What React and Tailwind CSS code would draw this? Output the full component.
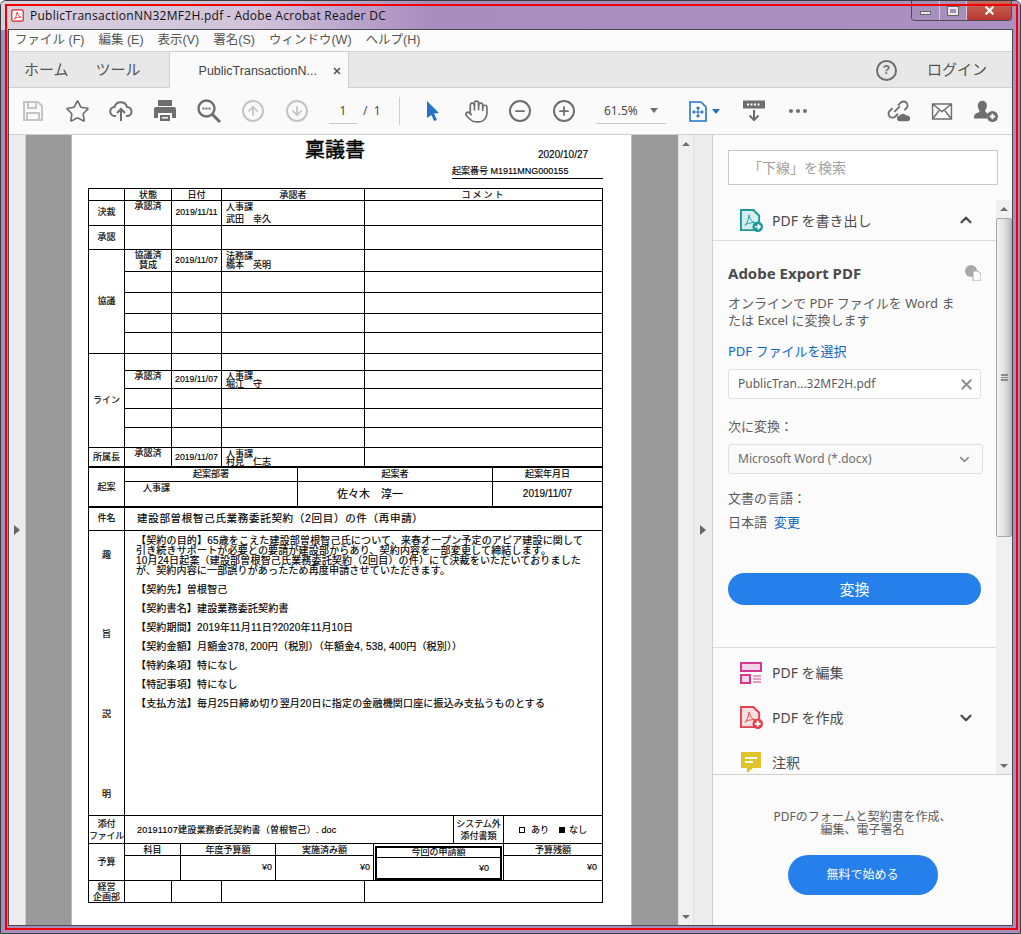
import { Star, ArrowUp, ArrowDown, Hand, Minus, Plus, X, ChevronUp, ChevronDown } from 'lucide-react'

const CJK = 'font-["Liberation_Sans","Noto_Sans_CJK_JP",sans-serif]'

const MENU = ['ファイル (F)', '編集 (E)', '表示(V)', '署名(S)', 'ウィンドウ(W)', 'ヘルプ(H)']

// ---- icons that no package has in this shape ----
function PdfLogo({ className = '', color = '#e0434b', fill = '#fbdfe0', badge = 'plus' }) {
  return (
    <svg viewBox="0 0 24 24" className={className}>
      <path d="M1 1h13l6 6v9a5 5 0 0 0-4 6H1z" fill={fill} stroke={color} strokeWidth="2" />
      <path d="M5 17c2-1 4-6 4-9s1-2 1 0 3 6 5 6-7 0-10 3z" fill="none" stroke={color} strokeWidth="1" />
      <circle cx="18.5" cy="18.5" r="5.5" fill={color} />
      {badge === 'plus'
        ? <path d="M18.5 15.5v6M15.5 18.5h6" stroke="#fff" strokeWidth="2" />
        : <path d="M15.5 18.5h5M18.5 16l2.5 2.5-2.5 2.5" stroke="#fff" strokeWidth="1.6" fill="none" />}
    </svg>
  )
}

function ToolbarIcons() {
  return (
    <div className="flex items-center h-full">
      <svg viewBox="0 0 20 20" className="w-[20px] h-[20px] ml-[14px] text-[#c4c4c4]" fill="none" stroke="currentColor" strokeWidth="2">
        <path d="M1 1h14l4 4v14H1z" /><path d="M5 1v6h8V1M4 19v-7h12v7" />
      </svg>
      <Star className="w-[25px] h-[25px] ml-[22px] text-[#6e6e6e]" strokeWidth={1.6} />
      <svg viewBox="0 0 24 24" className="w-[24px] h-[24px] ml-[19px] text-[#6e6e6e]" fill="none" stroke="currentColor" strokeWidth="2">
        <path d="M7 17H6a4.5 4.5 0 0 1-.5-9A6.5 6.5 0 0 1 18 8a4.5 4.5 0 0 1 0 9h-1" /><path d="M12 22V11M8 14l4-4 4 4" />
      </svg>
      <svg viewBox="0 0 24 24" className="w-[24px] h-[24px] ml-[20px] text-[#6e6e6e]" fill="currentColor">
        <path d="M5 1h14v6H5zM3 8h18a2 2 0 0 1 2 2v9h-4v-5H5v5H1v-9a2 2 0 0 1 2-2z" /><path d="M7 16h10v6H7zM9 18v1.5h6V18z" fillRule="evenodd" />
      </svg>
      <svg viewBox="0 0 24 24" className="w-[24px] h-[24px] ml-[20px] text-[#6e6e6e]" fill="none" stroke="currentColor">
        <circle cx="9.5" cy="9.5" r="8" strokeWidth="2.4" />
        <path d="M15.5 15.5L23 23" strokeWidth="3" />
        <path d="M5.5 9.5h8" strokeWidth="2" strokeDasharray="2 1" />
      </svg>
      <span className="w-[22px] h-[22px] ml-[21px] rounded-full border-2 border-[#c4c4c4] flex items-center justify-center">
        <ArrowUp className="w-[14px] h-[14px] text-[#c4c4c4]" strokeWidth={3} />
      </span>
      <span className="w-[22px] h-[22px] ml-[22px] rounded-full border-2 border-[#c4c4c4] flex items-center justify-center">
        <ArrowDown className="w-[14px] h-[14px] text-[#c4c4c4]" strokeWidth={3} />
      </span>
      <span className="w-[28px] h-[25px] ml-[21px] border-b border-[#c8c8c8] text-center text-[12px] leading-[23px] text-[#4b4b4b]">1</span>
      <span className="ml-[6px] text-[12px] text-[#4b4b4b] w-[24px]">/ &nbsp;1</span>
      <span className="w-px h-[28px] ml-[12px] bg-[#cfcfcf]" />
      <svg viewBox="0 0 14 22" className="w-[14px] h-[22px] ml-[26px]" fill="#2273c7">
        <path d="M1 1l12 12-5 .5 3 6.5-3 1-2.5-6L1 18z" />
      </svg>
      <Hand className="w-[25px] h-[25px] ml-[24px] text-[#6e6e6e]" strokeWidth={1.6} />
      <span className="w-[22px] h-[22px] ml-[20px] rounded-full border-2 border-[#6e6e6e] flex items-center justify-center">
        <Minus className="w-[14px] h-[14px] text-[#6e6e6e]" strokeWidth={3} />
      </span>
      <span className="w-[22px] h-[22px] ml-[22px] rounded-full border-2 border-[#6e6e6e] flex items-center justify-center">
        <Plus className="w-[14px] h-[14px] text-[#6e6e6e]" strokeWidth={3} />
      </span>
      <span className="flex items-center justify-between w-[70px] h-[25px] ml-[21px] pl-[8px] pr-[8px] border-b border-[#c8c8c8] text-[12px] text-[#4b4b4b]">
        61.5%
        <span className="w-0 h-0 border-x-[4px] border-x-transparent border-t-[5px] border-t-[#6e6e6e]" />
      </span>
      <svg viewBox="0 0 18 21" className="w-[18px] h-[21px] ml-[23px]" fill="none" stroke="#2273c7" strokeWidth="1.6">
        <path d="M1 1h11l5 5v14H1z" /><path d="M9 6v10M4 11h10M7.5 7.5L9 6l1.5 1.5M7.5 14.5L9 16l1.5-1.5M5.5 9.5L4 11l1.5 1.5M12.5 9.5L14 11l-1.5 1.5" strokeWidth="1.2" />
      </svg>
      <span className="w-0 h-0 ml-[5px] border-x-[4px] border-x-transparent border-t-[5px] border-t-[#2273c7]" />
      <svg viewBox="0 0 22 22" className="w-[22px] h-[22px] ml-[23px] text-[#6e6e6e]" fill="none" stroke="currentColor">
        <path d="M0 1h22v7H0z" fill="currentColor" /><path d="M4 4.5h14" stroke="#fff" strokeWidth="2" strokeDasharray="2 1.5" />
        <path d="M11 10v10M6.5 15.5L11 20l4.5-4.5" strokeWidth="2" />
      </svg>
      <span className="flex gap-[3px] ml-[24px]">
        <span className="w-[4px] h-[4px] rounded-full bg-[#6e6e6e]" /><span className="w-[4px] h-[4px] rounded-full bg-[#6e6e6e]" /><span className="w-[4px] h-[4px] rounded-full bg-[#6e6e6e]" />
      </span>
      <svg viewBox="0 0 26 24" className="w-[24px] h-[24px] ml-[79px] text-[#6e6e6e]" fill="none" stroke="currentColor" strokeWidth="2">
        <path d="M9 13l6-6M7 9l-3 3a4 4 0 0 0 6 6l3-3M13 6l3-3a4 4 0 0 1 6 6l-2 2" />
        <path d="M15 23a3 3 0 0 1 0-6 4 4 0 0 1 7 0 3 3 0 0 1 2 6z" fill="currentColor" stroke="none" />
      </svg>
      <svg viewBox="0 0 22 18" className="w-[22px] h-[17px] ml-[21px] text-[#6e6e6e]" fill="none" stroke="currentColor" strokeWidth="1.5">
        <path d="M1 1h20v16H1zM1 1l10 8 10-8M1 17l7-9M21 17l-7-9" />
      </svg>
      <svg viewBox="0 0 26 24" className="w-[24px] h-[24px] ml-[21px] text-[#6e6e6e]" fill="currentColor">
        <path d="M9 1a5 5 0 0 1 5 5c0 3-2 5-2 6 0 1 2 2 3 3a7 7 0 0 0-1 5H0c0-4 1-5 4-6 2-1 2-1 2-2S4 9 4 6a5 5 0 0 1 5-5z" />
        <circle cx="20" cy="18" r="6" /><path d="M20 15v6M17 18h6" stroke="#fff" strokeWidth="2" />
      </svg>
    </div>
  )
}

// ---- document page ----
function Cell({ className = '', children, ...rest }) {
  return <td className={`border border-black p-0 text-center align-middle ${className}`} {...rest}>{children}</td>
}

function ApprovalTable() {
  const Row = ({ h, label, status, date, who, span }) => (
    <tr className={h}>
      {label && <Cell rowSpan={span}>{label}</Cell>}
      <Cell className="align-top leading-[10px]">{status}</Cell>
      <Cell className="text-[8.7px]">{date}</Cell>
      <Cell className="text-left pl-[4px] leading-[9px]">{who}</Cell>
      <Cell />
    </tr>
  )
  return (
    <table className="table-fixed border-collapse w-[515px]">
      <colgroup>
        <col className="w-[36px]" /><col className="w-[47px]" /><col className="w-[50px]" /><col className="w-[143px]" /><col />
      </colgroup>
      <tbody>
        <tr className="h-[12px] leading-[10px]">
          <Cell /><Cell>状態</Cell><Cell>日付</Cell><Cell>承認者</Cell><Cell className="tracking-[2px]">コメント</Cell>
        </tr>
        <Row h="h-[25px]" label="決裁" status="承認済" date="2019/11/11" who={<div className="leading-[12px]">人事課<br />武田　幸久</div>} />
        <Row h="h-[24px]" label="承認" />
        <Row h="h-[22px]" label="協議" span={5} status={<>協議済<br />賛成</>} date="2019/11/07" who={<>法務課<br />橋本　英明</>} />
        <Row h="h-[21px]" /><Row h="h-[21px]" /><Row h="h-[19px]" /><Row h="h-[21px]" />
        <Row h="h-[17px]" label="ライン" span={5} />
        <Row h="h-[18px]" status="承認済" date="2019/11/07" who={<div className="leading-[8px]">人事課<br />堀江　守</div>} />
        <Row h="h-[20px]" /><Row h="h-[19px]" /><Row h="h-[20px]" />
        <Row h="h-[20px]" label="所属長" status="承認済" date="2019/11/07" who={<div className="leading-[8px]">人事課<br />村見　仁志</div>} />
      </tbody>
    </table>
  )
}

function ProposalTable() {
  return (
    <table className="table-fixed border-collapse w-[515px] -mt-[2px]">
      <colgroup><col className="w-[36px]" /><col className="w-[173px]" /><col className="w-[195px]" /><col /></colgroup>
      <tbody>
        <tr className="h-[14px] leading-[10px]">
          <Cell rowSpan={2} className="border-t-2 border-b-2">起案</Cell>
          <Cell className="border-t-2">起案部署</Cell><Cell className="border-t-2">起案者</Cell><Cell className="border-t-2">起案年月日</Cell>
        </tr>
        <tr className="h-[26px]">
          <Cell className="border-b-2 text-left pl-[18px] align-top text-[9px]">人事課</Cell>
          <Cell className="border-b-2 text-left pl-[39px] text-[11px]">佐々木　淳一</Cell>
          <Cell className="border-b-2 text-[10px]">2019/11/07</Cell>
        </tr>
      </tbody>
    </table>
  )
}

const BODY_ITEMS = [
  '【契約先】曽根智己',
  '【契約書名】建設業務委託契約書',
  '【契約期間】2019年11月11日?2020年11月10日',
  '【契約金額】月額金378, 200円（税別）（年額金4, 538, 400円（税別））',
  '【特約条項】特になし',
  '【特記事項】特になし',
  '【支払方法】毎月25日締め切り翌月20日に指定の金融機関口座に振込み支払うものとする',
]

function SummaryTable() {
  return (
    <table className="table-fixed border-collapse w-[515px] -mt-px">
      <colgroup><col className="w-[36px]" /><col /></colgroup>
      <tbody>
        <tr className="h-[23px]">
          <Cell>件名</Cell>
          <Cell className="text-left pl-[12px] text-[10.5px] tracking-[0.7px]">建設部曽根智己氏業務委託契約（2回目）の件（再申請）</Cell>
        </tr>
        <tr className="h-[285px]">
          <Cell>
            <div className="flex flex-col h-[283px] justify-between pt-[17px] pb-[13px]">
              <span>趣</span><span>旨</span><span>説</span><span>明</span>
            </div>
          </Cell>
          <Cell className="text-left align-top pl-[11px] pt-[5px] text-[10px] tracking-[0.17px] whitespace-nowrap">
            <div className="leading-[10px]">
              <div>【契約の目的】65歳をこえた建設部曽根智己氏について、来春オープン予定のアピア建設に関して</div>
              <div>引き続きサポートが必要との要請が建設部からあり、契約内容を一部変更して締結します。</div>
              <div>10月24日起案（建設部曽根智己氏業務委託契約（2回目）の件）にて決裁をいただいておりました</div>
              <div>が、契約内容に一部誤りがあったため再度申請させていただきます。</div>
            </div>
            <div className="flex flex-col gap-[5.5px] mt-[7px] leading-[13.5px]">
              {BODY_ITEMS.map(t => <div key={t}>{t}</div>)}
            </div>
          </Cell>
        </tr>
      </tbody>
    </table>
  )
}

function AttachmentTable() {
  return (
    <table className="table-fixed border-collapse w-[515px] -mt-px">
      <colgroup><col className="w-[36px]" /><col className="w-[329px]" /><col className="w-[50px]" /><col /></colgroup>
      <tbody>
        <tr className="h-[28px] leading-[12px]">
          <Cell className="whitespace-nowrap tracking-[-0.3px]">添付<br />ファイル</Cell>
          <Cell className="text-left pl-[12px] text-[9px] tracking-[0.2px]">20191107建設業務委託契約書（曽根智己）. doc</Cell>
          <Cell className="whitespace-nowrap">システム外<br />添付書類</Cell>
          <Cell className="text-[9px]">
            <span className="inline-block w-[6px] h-[6px] border border-black mr-[6px]" />あり
            <span className="inline-block w-[6px] h-[6px] bg-black ml-[10px] mr-[4px]" />なし
          </Cell>
        </tr>
      </tbody>
    </table>
  )
}

function BudgetTable() {
  const amounts = ['', '¥0', '¥0']
  return (
    <table className="table-fixed border-collapse w-[515px] -mt-px">
      <colgroup><col className="w-[36px]" /><col className="w-[56px]" /><col className="w-[95px]" /><col className="w-[98px]" /><col className="w-[130px]" /><col /></colgroup>
      <tbody>
        <tr className="h-[12px] leading-[10px]">
          <Cell rowSpan={2}>予算</Cell>
          <Cell>科目</Cell><Cell>年度予算額</Cell><Cell>実施済み額</Cell>
          <Cell rowSpan={2} className="px-[1px] pt-[1px] pb-0">
            <div className="h-[34px] border-2 border-black flex flex-col">
              <div className="h-[10px] leading-[8px] border-b border-black">今回の申請額</div>
              <div className="flex-1 flex items-center justify-end pr-[11px] text-[9px]">¥0</div>
            </div>
          </Cell>
          <Cell>予算残額</Cell>
        </tr>
        <tr className="h-[25px] text-[9px]">
          {amounts.map((a, i) => (
            <Cell key={i} className="text-right pr-[3px]">{a}</Cell>
          ))}
          <Cell className="text-right pr-[5px]">¥0</Cell>
        </tr>
      </tbody>
    </table>
  )
}

function ManagementTable() {
  return (
    <table className="table-fixed border-collapse w-[515px] -mt-px">
      <colgroup><col className="w-[36px]" /><col className="w-[47px]" /><col className="w-[50px]" /><col className="w-[143px]" /><col /></colgroup>
      <tbody>
        <tr className="h-[22px] leading-[10px]">
          <Cell>経営<br />企画部</Cell><Cell /><Cell /><Cell /><Cell />
        </tr>
      </tbody>
    </table>
  )
}

function PdfPage() {
  return (
    <div className={`w-[559px] h-full bg-white ml-[46px] shadow-[0_0_0_1px_#bdbdbd] text-[9px] text-black [-webkit-text-stroke:0.15px_black] overflow-hidden ${CJK}`}>
      <div className="relative h-[53px]">
        <div className="absolute left-[233px] top-[2px] text-[20px] leading-[26px] [-webkit-text-stroke:0.4px_black]">稟議書</div>
        <div className="absolute left-[466px] top-[12px] text-[10px]">2020/10/27</div>
        <div className="absolute left-[380px] top-[28px] w-[151px] h-[16px] border-b border-black text-[9px] leading-[16px] whitespace-nowrap">起案番号 M1911MNG000155</div>
      </div>
      <div className="ml-[16px] flex flex-col">
        <ApprovalTable />
        <ProposalTable />
        <SummaryTable />
        <AttachmentTable />
        <BudgetTable />
        <ManagementTable />
      </div>
    </div>
  )
}

// ---- right panel ----
function ToolRow({ icon, label, right, className = 'h-[45px]' }) {
  return (
    <div className={`flex items-center pl-[26px] ${className}`}>
      <span className="w-[24px] h-[24px] flex items-center justify-center">{icon}</span>
      <span className="ml-[9px] text-[14px] text-[#4b4b4b]">{label}</span>
      {right && <span className="ml-auto mr-[21px] text-[#4b4b4b]">{right}</span>}
    </div>
  )
}

function Scrollbar({ className = '', thumb = '' }) {
  return (
    <div className={`flex flex-col items-center shrink-0 ${className}`}>
      <span className="mt-[7px] w-0 h-0 border-x-[4px] border-x-transparent border-b-[4px] border-b-[#6e6e6e]" />
      {thumb && (
        <div className={`mt-[7px] w-full ${thumb} bg-gradient-to-r from-[#f2f2f2] via-[#e2e2e2] to-[#bdbdbd] border border-[#a8a8a8] rounded-[2px] flex items-center justify-center`}>
          <span className="w-[7px] h-[7px] border-y border-[#8a8a8a] bg-[linear-gradient(#8a8a8a_1px,transparent_1px)] bg-[length:100%_2px]" />
        </div>
      )}
      <span className="mt-auto mb-[6px] w-0 h-0 border-x-[4px] border-x-transparent border-t-[4px] border-t-[#6e6e6e]" />
    </div>
  )
}

function Sidebar() {
  return (
    <div className="w-[300px] shrink-0 flex flex-col bg-[#fbfbfb] border-l border-[#cfcfcf]">
      <div className="pl-[15px] pr-[14px] pt-[15px] h-[65px] shrink-0">
        <div className="h-[35px] border border-[#c8c8c8] bg-white pl-[19px] leading-[33px] text-[14px] text-[#a0a0a0]">「下線」を検索</div>
      </div>
      <div className="flex flex-1 min-h-0">
        <div className="flex-1 min-w-0 overflow-hidden">
          <ToolRow
            className="h-[41px] border-b border-[#dcdcdc]"
            icon={<PdfLogo className="w-[23px] h-[23px]" color="#1c9a9a" fill="#d5eeee" badge="arrow" />}
            label="PDF を書き出し"
            right={<ChevronUp className="w-[18px] h-[18px]" strokeWidth={3} />}
          />
          <div className="h-[407px] pl-[15px] pr-[15px] border-b border-[#dcdcdc]">
            <div className="flex items-center justify-between pt-[22px]">
              <span className="text-[15px] font-bold text-[#4b4b4b] leading-[20px]">Adobe Export PDF</span>
              <svg viewBox="0 0 16 16" className="w-[16px] h-[16px] text-[#a8a8a8]" fill="currentColor">
                <circle cx="6" cy="6" r="6" /><path d="M8 6h5l3 3v7H8z" fill="#fbfbfb" stroke="currentColor" />
              </svg>
            </div>
            <div className="mt-[12px] text-[13px] leading-[17px] text-[#5c5c5c] whitespace-nowrap">オンラインで PDF ファイルを Word ま<br />たは Excel に変換します</div>
            <div className="mt-[13px] text-[13px] text-[#0d66c2] leading-[18px]">PDF ファイルを選択</div>
            <div className="mt-[9px] h-[30px] w-[253px] flex items-center justify-between pl-[9px] pr-[5px] border border-[#e0e0e0] rounded-[3px] bg-white text-[12px] text-[#5c5c5c]">
              PublicTran...32MF2H.pdf
              <X className="w-[17px] h-[17px] text-[#8a8a8a]" strokeWidth={2.5} />
            </div>
            <div className="mt-[18px] text-[13px] text-[#5c5c5c] leading-[18px]">次に変換：</div>
            <div className="mt-[9px] h-[30px] w-[255px] flex items-center justify-between pl-[9px] pr-[10px] border border-[#e0e0e0] rounded-[3px] bg-[#fafafa] text-[12px] text-[#6e6e6e]">
              Microsoft Word (*.docx)
              <ChevronDown className="w-[15px] h-[15px] text-[#8a8a8a]" strokeWidth={2.5} />
            </div>
            <div className="mt-[15px] text-[13px] text-[#5c5c5c] leading-[18px]">文書の言語：</div>
            <div className="mt-[6px] flex gap-[7px] text-[13px] text-[#5c5c5c] leading-[18px]">日本語<span className="text-[#0d66c2]">変更</span></div>
            <div className="mt-[42px] h-[32px] w-[253px] rounded-full bg-[#2680eb] text-white text-[15px] leading-[32px] text-center">変換</div>
          </div>
          <ToolRow
            className="h-[45px] mt-[2px]"
            icon={
              <svg viewBox="0 0 22 22" className="w-[22px] h-[22px]" fill="#f6d3e6" stroke="#d83790" strokeWidth="2">
                <path d="M1 1h20v8H1zM1 13h9v8H1z" /><path d="M13 14h8M13 17h8M13 20h8" strokeWidth="1" />
              </svg>
            }
            label="PDF を編集"
          />
          <ToolRow
            icon={<PdfLogo className="w-[23px] h-[23px]" />}
            label="PDF を作成"
            right={<ChevronDown className="w-[18px] h-[18px]" strokeWidth={3} />}
          />
          <ToolRow
            icon={
              <svg viewBox="0 0 20 22" className="w-[20px] h-[22px]" fill="#e0c22b">
                <path d="M1 0h18a1 1 0 0 1 1 1v14a1 1 0 0 1-1 1H12l-6 5v-5H1a1 1 0 0 1-1-1V1a1 1 0 0 1 1-1z" />
                <path d="M4 6h12M4 10h8" stroke="#fff" strokeWidth="2" />
              </svg>
            }
            label="注釈"
          />
        </div>
        <Scrollbar className="w-[16px] bg-[#f0f0f0]" thumb="h-[319px]" />
      </div>
      <div className="h-[151px] shrink-0 border-t border-[#cfcfcf] flex flex-col items-center pt-[35px]">
        <div className="text-[12px] leading-[13px] text-center text-[#5c5c5c]">PDFのフォームと契約書を作成、<br />編集、電子署名</div>
        <div className="mt-[19px] w-[150px] h-[40px] rounded-full bg-[#2680eb] text-white text-[12px] leading-[40px] text-center">無料で始める</div>
      </div>
    </div>
  )
}

export default function App() {
  return (
    <div className={`relative w-[1021px] h-[934px] overflow-hidden bg-[#a98dbf] border border-[#3c3c3c] rounded-t-[6px] p-[7px] pt-0 flex flex-col font-["Noto_Sans","Noto_Sans_CJK_JP",sans-serif]`}>
      {/* title bar */}
      <div className="absolute inset-x-0 top-0 h-[29px] bg-[linear-gradient(90deg,#d9d0df_0%,#d0c3da_25%,#a98dbf_42%,#ab90c2_100%)]" />
      <div className="relative h-[28px] shrink-0 flex items-center pt-[1px]">
        <svg viewBox="0 0 16 16" className="w-[13px] h-[15px] ml-[3px]">
          <rect x="1" y="1" width="14" height="14" rx="2" fill="#fff" stroke="#e01f1f" strokeWidth="1.5" />
          <path d="M4 12c2-1 3-5 3-7s1-1 1 0 2 5 4 5-6 0-8 2z" fill="none" stroke="#e01f1f" />
        </svg>
        <span className="ml-[6px] text-[12px] tracking-[0.27px] text-[#111] font-['Open_Sans',sans-serif]">PublicTransactionNN32MF2H.pdf - Adobe Acrobat Reader DC</span>
      </div>

      {/* app frame */}
      <div className="relative flex-1 min-h-0 flex flex-col border border-[#4a4a55]">
        <div className={`h-[22px] shrink-0 bg-[#fbfbfb] border-b border-[#d4d4d4] flex items-center gap-[14px] pl-[6px] text-[12.5px] text-[#555] ${CJK}`}>
          {MENU.map(m => <span key={m}>{m}</span>)}
        </div>
        <div className={`h-[36px] shrink-0 bg-[#e8e8e8] border-b border-[#cfcfcf] flex items-end text-[#555] ${CJK}`}>
          <span className="h-full leading-[36px] ml-[15px] text-[15px]">ホーム</span>
          <span className="h-full leading-[36px] ml-[27px] text-[15px]">ツール</span>
          <span className="flex items-center h-[37px] -mb-px ml-[28px] w-[180px] bg-[#fafafa] border-x border-t border-[#cfcfcf] pl-[29px] pt-[2px] text-[12.5px] text-[#444] whitespace-nowrap">
            PublicTransactionN...
            <X className="w-[10px] h-[10px] ml-[15px] text-[#555]" strokeWidth={4} />
          </span>
          <span className="h-full flex items-center ml-auto mr-[25px] pt-[1px]">
            <span className="w-[21px] h-[21px] rounded-full border-2 border-[#6e6e6e] text-center text-[12px] leading-[17px] font-bold text-[#6e6e6e]">?</span>
            <span className="ml-[30px] text-[15px]">ログイン</span>
          </span>
        </div>
        <div className="h-[47px] shrink-0 bg-[#fafafa] border-b border-[#cfcfcf]">
          <ToolbarIcons />
        </div>

        {/* main */}
        <div className="flex-1 min-h-0 flex">
          <div className="w-[17px] shrink-0 bg-[#ececec] border-r border-[#cfcfcf] flex items-center justify-center">
            <span className="w-0 h-0 border-y-[5px] border-y-transparent border-l-[6px] border-l-[#666]" />
          </div>
          <div className="flex-1 min-w-0 bg-[#9a9a9a] overflow-hidden">
            <PdfPage />
          </div>
          <Scrollbar className="w-[16px] ml-[1px] bg-[#f0f0f0] border-x border-[#e0e0e0]" />
          <div className="w-[18px] shrink-0 bg-[#ececec] flex items-center justify-center">
            <span className="w-0 h-0 border-y-[5px] border-y-transparent border-l-[6px] border-l-[#666]" />
          </div>
          <Sidebar />
        </div>
      </div>

      {/* window buttons */}
      <div className="absolute right-[8px] top-0 h-[20px] w-[101px] flex border border-t-0 border-[#4a4a55] rounded-b-[4px] overflow-hidden text-white">
        <span className="w-[28px] bg-[#a78fbc] border-r border-[#d5cbdf] flex items-start justify-center"><span className="mt-[10px] w-[11px] h-[4px] bg-[#e8e8e8] border border-[#666]" /></span>
        <span className="w-[27px] bg-[#a78fbc] border-r border-[#d5cbdf] flex items-start justify-center"><span className="mt-[6px] w-[10px] h-[8px] border-2 border-[#e8e8e8] outline outline-[#666]" /></span>
        <span className="flex-1 bg-gradient-to-b from-[#c56a5f] to-[#b8342b] flex items-center justify-center"><X className="w-[13px] h-[13px]" strokeWidth={4} /></span>
      </div>

      {/* red highlight frame */}
      <div className="absolute left-[4px] top-[3px] right-[2px] bottom-[3px] border-2 border-[#f00000] pointer-events-none" />
    </div>
  )
}
